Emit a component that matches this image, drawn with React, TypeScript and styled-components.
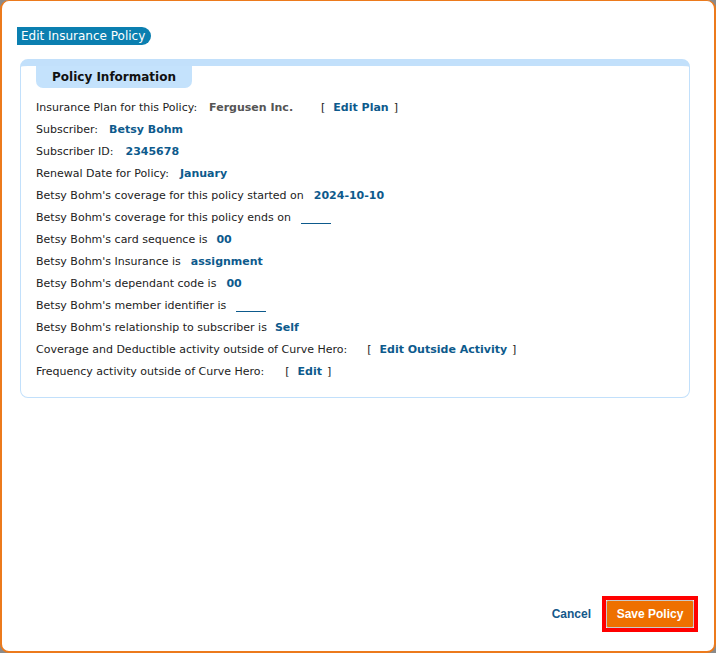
import React from "react";
import styled, { createGlobalStyle } from "styled-components";

const Global = createGlobalStyle`
  html, body { margin: 0; padding: 0; background: #8a8a8a; }
  body { font-family: "DejaVu Sans", Verdana, sans-serif; }
`;

const Dialog = styled.div`
  box-sizing: border-box;
  width: 716px;
  height: 653px;
  background: #fff;
  border: 2px solid #ec7a1c;
  border-top-width: 1px;
  border-radius: 9px;
  display: flex;
  flex-direction: column;
  padding: 26px 0 0 15px;
`;

const TitlePill = styled.div`
  align-self: flex-start;
  background: #0b7fb0;
  color: #fff;
  font-size: 12px;
  line-height: 18px;
  height: 18px;
  padding: 0 6px 0 4px;
  border-radius: 0 9px 9px 0;
  white-space: nowrap;
`;

const Panel = styled.section`
  box-sizing: border-box;
  margin: 14px 0 0 3px;
  width: 670px;
  height: 339px;
  border: 1px solid #c2e0fb;
  border-top: 7px solid #c2e0fb;
  border-radius: 8px;
  padding: 0 15px;
  display: flex;
  flex-direction: column;
`;

const Tab = styled.div`
  align-self: flex-start;
  background: #c4e2fc;
  color: #111;
  font-weight: bold;
  font-size: 12px;
  height: 22px;
  line-height: 23px;
  padding: 0 16px;
  white-space: nowrap;
  border-radius: 0 0 7px 7px;
`;

const Rows = styled.div`
  margin-top: 9px;
  display: flex;
  flex-direction: column;
`;

const Row = styled.div`
  height: 22px;
  line-height: 22px;
  font-size: 11px;
  color: #222;
  white-space: nowrap;
`;

const Value = styled.span<{ $gray?: boolean }>`
  font-weight: bold;
  color: ${(p) => (p.$gray ? "#555" : "#0d5a8c")};
`;

const Gap = styled.span<{ $w: number }>`
  display: inline-block;
  width: ${(p) => p.$w}px;
`;

const Blank = styled.span`
  display: inline-block;
  width: 30px;
  height: 1px;
  background: #0d5a8c;
  vertical-align: -3px;
`;

const Bracket = styled.span`
  color: #222;
`;

const Footer = styled.div`
  margin-top: auto;
  display: flex;
  justify-content: flex-end;
  align-items: center;
  gap: 11px;
  padding: 0 16px 19px 0;
`;

const Cancel = styled.a`
  font-family: "Liberation Sans", Arial, sans-serif;
  font-weight: bold;
  font-size: 12px;
  color: #14588a;
  cursor: pointer;
`;

const SaveFrame = styled.div`
  border: 4px solid #ff0000;
`;

const SaveButton = styled.button`
  display: block;
  box-sizing: border-box;
  height: 28px;
  width: 88px;
  margin: 0;
  background: #ee7000;
  color: #fff;
  border: 1px solid #c9c9c9;
  border-radius: 2px;
  font-family: "Liberation Sans", Arial, sans-serif;
  font-weight: bold;
  font-size: 12px;
  cursor: pointer;
`;

const Edit = ({ label }: { label: string }) => (
  <>
    <Bracket>[</Bracket>
    <Gap $w={8} />
    <Value>{label}</Value>
    <Gap $w={5} />
    <Bracket>]</Bracket>
  </>
);

export default function App() {
  return (
    <>
      <Global />
      <Dialog>
        <TitlePill>Edit Insurance Policy</TitlePill>
        <Panel>
          <Tab>Policy Information</Tab>
          <Rows>
            <Row>
              Insurance Plan for this Policy:<Gap $w={12} />
              <Value $gray>Fergusen Inc.</Value>
              <Gap $w={28} />
              <Edit label="Edit Plan" />
            </Row>
            <Row>
              Subscriber:<Gap $w={11} />
              <Value>Betsy Bohm</Value>
            </Row>
            <Row>
              Subscriber ID:<Gap $w={12} />
              <Value>2345678</Value>
            </Row>
            <Row>
              Renewal Date for Policy:<Gap $w={11} />
              <Value>January</Value>
            </Row>
            <Row>
              Betsy Bohm's coverage for this policy started on<Gap $w={10} />
              <Value>2024-10-10</Value>
            </Row>
            <Row>
              Betsy Bohm's coverage for this policy ends on<Gap $w={10} />
              <Blank />
            </Row>
            <Row>
              Betsy Bohm's card sequence is<Gap $w={9} />
              <Value>00</Value>
            </Row>
            <Row>
              Betsy Bohm's Insurance is<Gap $w={10} />
              <Value>assignment</Value>
            </Row>
            <Row>
              Betsy Bohm's dependant code is<Gap $w={10} />
              <Value>00</Value>
            </Row>
            <Row>
              Betsy Bohm's member identifier is<Gap $w={10} />
              <Blank />
            </Row>
            <Row>
              Betsy Bohm's relationship to subscriber is<Gap $w={8} />
              <Value>Self</Value>
            </Row>
            <Row>
              Coverage and Deductible activity outside of Curve Hero:<Gap $w={20} />
              <Edit label="Edit Outside Activity" />
            </Row>
            <Row>
              Frequency activity outside of Curve Hero:<Gap $w={21} />
              <Edit label="Edit" />
            </Row>
          </Rows>
        </Panel>
        <Footer>
          <Cancel>Cancel</Cancel>
          <SaveFrame>
            <SaveButton>Save Policy</SaveButton>
          </SaveFrame>
        </Footer>
      </Dialog>
    </>
  );
}
